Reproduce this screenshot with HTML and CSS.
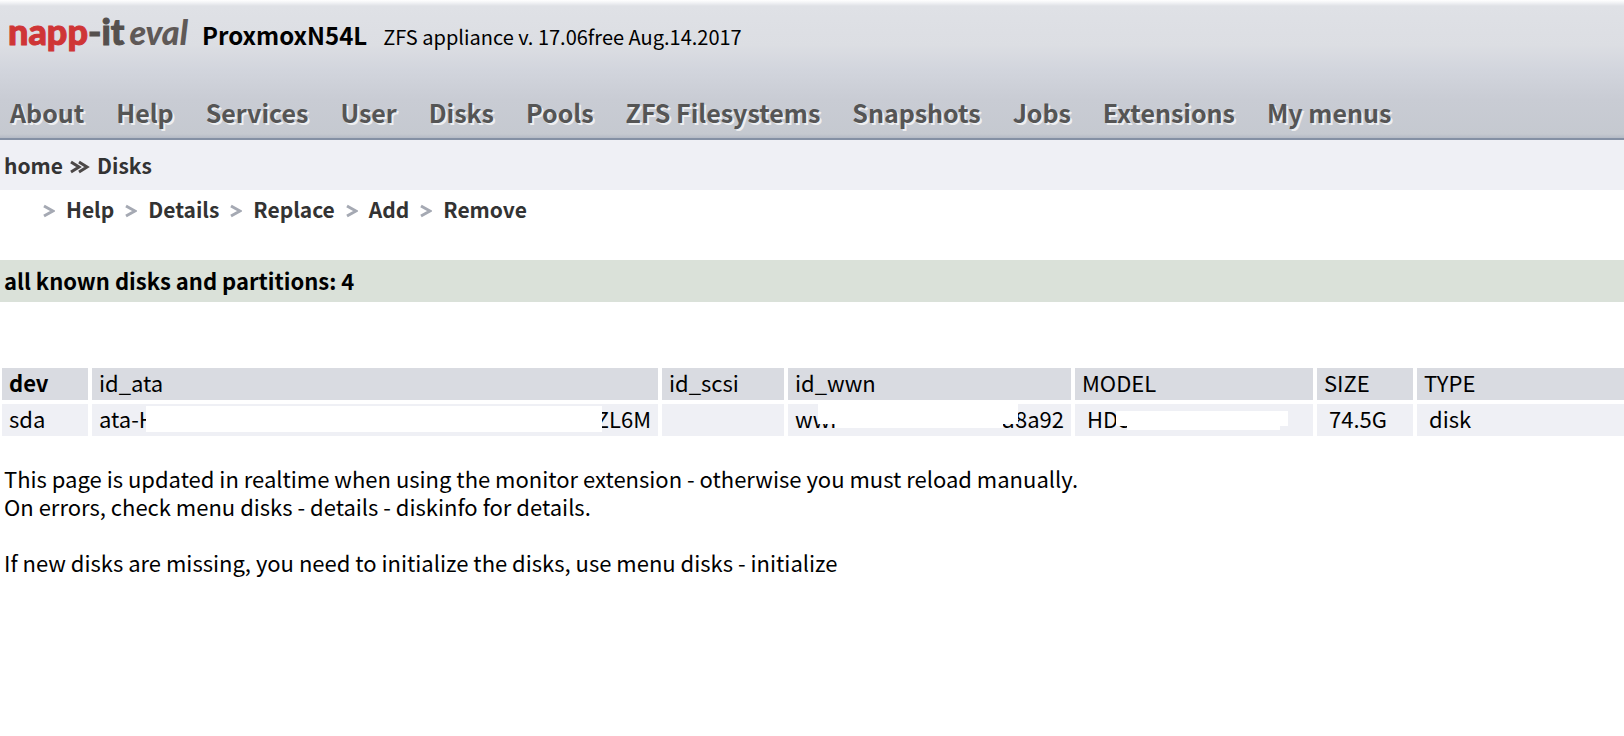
FILE: index.html
```html
<!DOCTYPE html>
<html lang="en">
<head>
<meta charset="utf-8">
<title>napp-it - Disks</title>
<link rel="stylesheet" href="styles.css">
</head>
<body>
<header class="header">
  <div class="brand">
    <a class="logo" href="#"><span class="logo-red">napp</span><span class="logo-grey">-it</span><span class="logo-edition">eval</span></a>
    <h1 class="host">ProxmoxN54L</h1>
    <span class="version">ZFS appliance v. 17.06free Aug.14.2017</span>
  </div>
  <nav class="menu">
    <a href="#">About</a>
    <a href="#">Help</a>
    <a href="#">Services</a>
    <a href="#">User</a>
    <a href="#">Disks</a>
    <a href="#">Pools</a>
    <a href="#">ZFS Filesystems</a>
    <a href="#">Snapshots</a>
    <a href="#">Jobs</a>
    <a href="#">Extensions</a>
    <a href="#">My menus</a>
  </nav>
</header>
<nav class="crumbs">
  <a href="#">home</a>
  <svg class="crumb-arrow" viewBox="0 0 20 14" aria-hidden="true"><path d="M1 2l8 5-8 5M9 2l8 5-8 5"/></svg>
  <a href="#">Disks</a>
</nav>
<nav class="submenu">
  <a href="#"><svg class="arrow" viewBox="0 0 12 14" aria-hidden="true"><path d="M1 2l9 5-9 5"/></svg>Help</a>
  <a href="#"><svg class="arrow" viewBox="0 0 12 14" aria-hidden="true"><path d="M1 2l9 5-9 5"/></svg>Details</a>
  <a href="#"><svg class="arrow" viewBox="0 0 12 14" aria-hidden="true"><path d="M1 2l9 5-9 5"/></svg>Replace</a>
  <a href="#"><svg class="arrow" viewBox="0 0 12 14" aria-hidden="true"><path d="M1 2l9 5-9 5"/></svg>Add</a>
  <a href="#"><svg class="arrow" viewBox="0 0 12 14" aria-hidden="true"><path d="M1 2l9 5-9 5"/></svg>Remove</a>
</nav>
<main>
  <h2 class="summary">all known disks and partitions: 4</h2>
  <table class="disks">
    <colgroup>
      <col class="col-dev"><col class="col-ata"><col class="col-scsi"><col class="col-wwn"><col class="col-model"><col class="col-size"><col>
    </colgroup>
    <thead>
      <tr><th class="key">dev</th><th>id_ata</th><th>id_scsi</th><th>id_wwn</th><th>MODEL</th><th>SIZE</th><th>TYPE</th></tr>
    </thead>
    <tbody>
      <tr>
        <td>sda</td>
        <td class="masked"><div class="ends"><span>ata-H</span><span>ZL6M</span></div><i class="mask mask-ata"></i></td>
        <td></td>
        <td class="masked"><div class="ends"><span>wwn</span><span>d8a92</span></div><i class="mask mask-wwn"></i></td>
        <td class="masked indent">HDS<i class="mask mask-model"></i></td>
        <td class="indent">74.5G</td>
        <td class="indent">disk</td>
      </tr>
    </tbody>
  </table>
  <div class="notes">
    <p>This page is updated in realtime when using the monitor extension - otherwise you must reload manually.<br>On errors, check menu disks - details - diskinfo for details.</p>
    <p>If new disks are missing, you need to initialize the disks, use menu disks - initialize</p>
  </div>
</main>
</body>
</html>
```
FILE: styles.css
```css
* { box-sizing: border-box; }
body {
  margin: 0;
  background: #fff;
  color: #000;
  font: 22px/28px "Noto Sans CJK SC", "Noto Sans", sans-serif;
}
a { color: inherit; text-decoration: none; }
h1, h2, p { margin: 0; }

.header {
  height: 140px;
  display: flex;
  flex-direction: column;
  justify-content: space-between;
  padding: 11px 8px 8px;
  border-bottom: 2px solid #8490a4;
  background: linear-gradient(#fff 0, #f0f1f4 3px, #dfe1e6 6px, #dcdee3 45px, #d2d5dd 70px, #c9ccd4 100px, #c5c9d0 134px, #b4bac5 138px);
}
.brand { display: flex; align-items: baseline; white-space: nowrap; }
.logo {
  display: flex;
  align-items: baseline;
  width: 194px;
  font: 900 36px/40px Lato, sans-serif;
}
.logo-red { color: #cf3536; -webkit-text-stroke: 1px #cf3536; }
.logo-grey { color: #55504e; -webkit-text-stroke: 1px #55504e; }
.logo-edition { margin-left: 5px; color: #5f5957; font-size: 34px; font-style: italic; font-weight: 900; }
.host { font-size: 24px; font-weight: 700; line-height: 40px; }
.version { margin-left: 16px; font-size: 20px; }
.menu {
  display: flex;
  gap: 32px;
  padding: 0 2px;
  color: #555;
  font-size: 25px;
  font-weight: 700;
  line-height: 36px;
  white-space: nowrap;
  text-shadow: 2px 2px 0 #eeeff1;
}

.crumbs {
  display: flex;
  align-items: center;
  gap: 7px;
  height: 50px;
  padding: 0 4px;
  background: #eff0f5;
  color: #333;
  font-size: 21px;
  font-weight: 700;
}
.crumb-arrow { width: 20px; height: 14px; margin-top: 4px; fill: none; stroke: #4c4848; stroke-width: 3; }
.submenu {
  display: flex;
  gap: 11px;
  height: 70px;
  padding: 5px 43px;
  color: #333;
  font-size: 21px;
  font-weight: 700;
}
.submenu a { display: flex; align-items: center; height: 28px; gap: 11px; }
.arrow { width: 12px; height: 14px; margin-top: 4px; fill: none; stroke: #a5a9b3; stroke-width: 3; }

.summary {
  padding: 6px 4px 8px;
  background: #dae1d9;
  font-size: 22px;
  font-weight: 700;
  line-height: 28px;
}
.disks {
  width: calc(100% + 6px);
  margin: 62px 0 0 -2px;
  border-collapse: separate;
  border-spacing: 4px;
  table-layout: fixed;
}
.col-dev { width: 86px; }
.col-ata { width: 566px; }
.col-scsi { width: 122px; }
.col-wwn { width: 283px; }
.col-model { width: 238px; }
.col-size { width: 96px; }
.disks th, .disks td {
  height: 32px;
  padding: 0 7px 4px;
  text-align: left;
  font-weight: 400;
}
.disks th { background: #d9dbe1; }
.disks td { background: #eff0f5; }
.disks .key { font-weight: 700; }
.disks .indent { padding-left: 12px; }
.ends { display: flex; justify-content: space-between; }
.masked { position: relative; }
.mask { position: absolute; background: #fff; }
.mask-ata { left: 54px; right: 56px; top: 2px; bottom: 4px; }
.mask-wwn {
  left: 30px; right: 53px; top: 0; bottom: 8px;
  clip-path: polygon(0 0, 100% 0, 100% 20px, 185px 20px, 185px 100%, 17px 100%, 17px 20px, 0 20px);
}
.mask-model {
  left: 41px; right: 25px; top: 7px; bottom: 6px;
  clip-path: polygon(0 0, 100% 0, 100% 15px, 164px 15px, 164px 100%, 11px 100%, 11px 15px, 0 15px);
}

.notes { display: grid; gap: 28px; padding: 24px 4px; }
```
